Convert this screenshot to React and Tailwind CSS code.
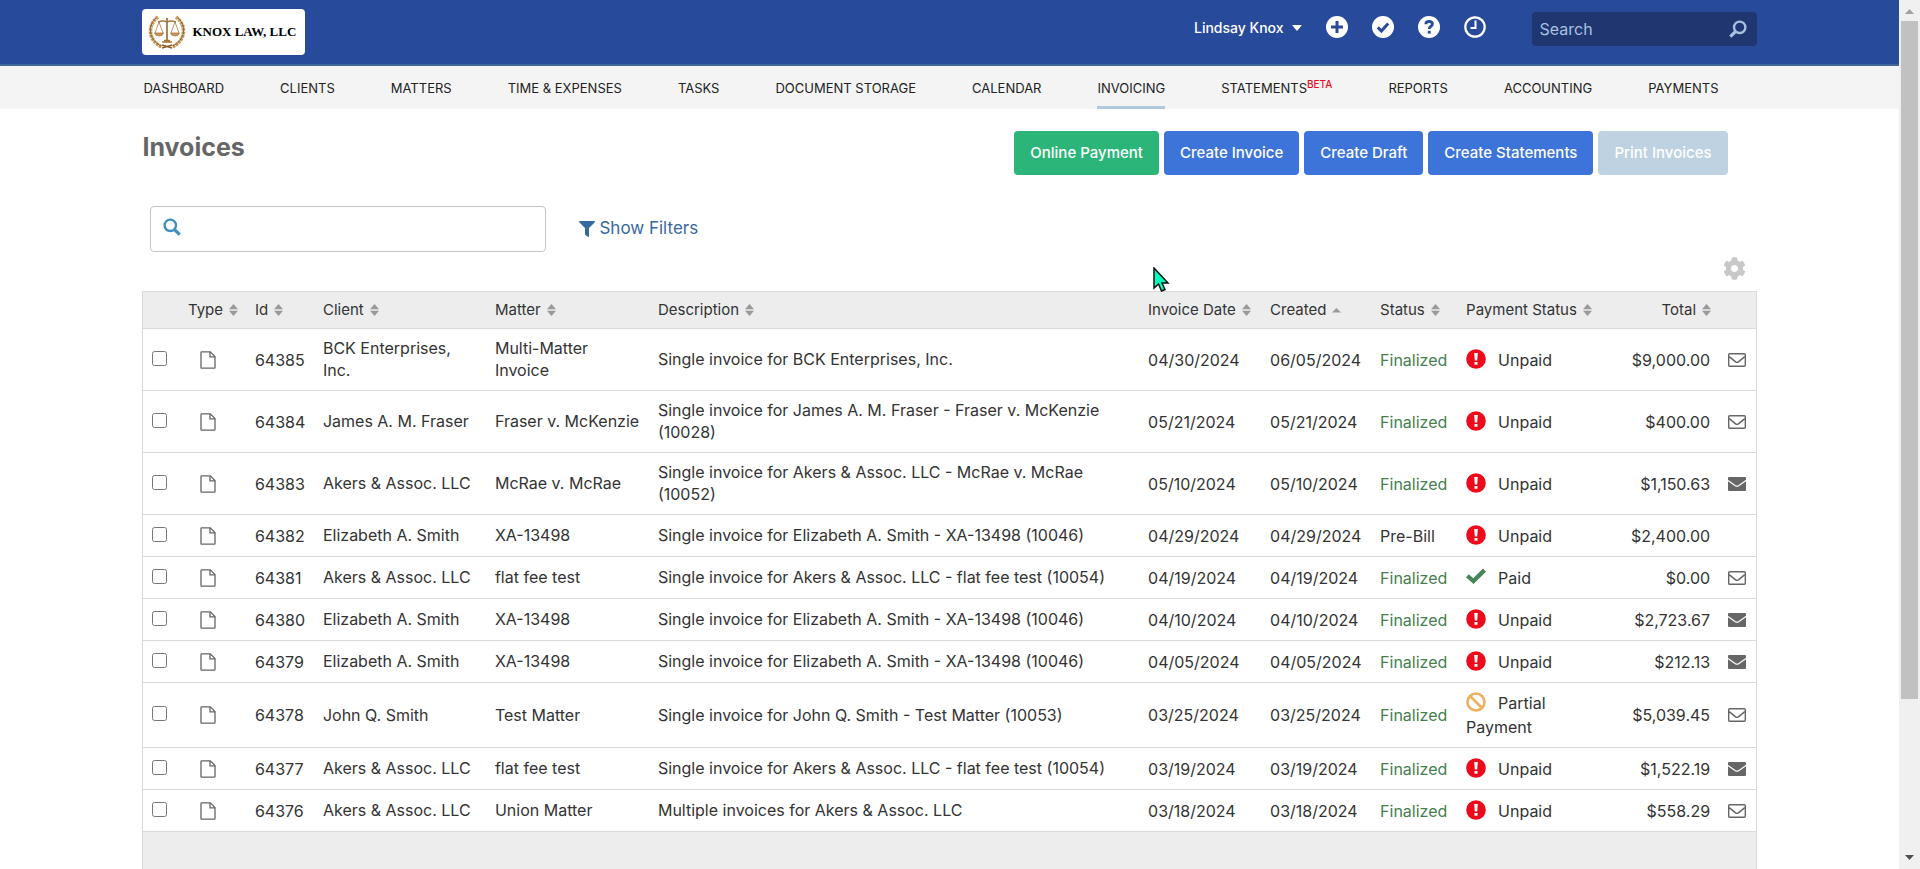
// src/App.jsx

import React, { useState } from 'react';
import { FaCog, FaFilter } from 'react-icons/fa';

const navItems = [
    { label: 'DASHBOARD' },
    { label: 'CLIENTS' },
    { label: 'MATTERS' },
    { label: 'TIME & EXPENSES' },
    { label: 'TASKS' },
    { label: 'DOCUMENT STORAGE' },
    { label: 'CALENDAR' },
    { label: 'INVOICING', active: true },
    { label: 'STATEMENTS', beta: true },
    { label: 'REPORTS' },
    { label: 'ACCOUNTING' },
    { label: 'PAYMENTS' },
];

const actions = [
    { label: 'Online Payment', style: 'bg-[#2bb578]' },
    { label: 'Create Invoice', style: 'bg-[#3c74d9]' },
    { label: 'Create Draft', style: 'bg-[#3c74d9]' },
    { label: 'Create Statements', style: 'bg-[#3c74d9]' },
    { label: 'Print Invoices', style: 'bg-[#bed2e2]', disabled: true },
];

const columns = [
    { label: 'Type', width: 'w-[67px]' },
    { label: 'Id', width: 'w-[68px]' },
    { label: 'Client', width: 'w-[172px]' },
    { label: 'Matter', width: 'w-[163px]' },
    { label: 'Description', width: '' },
    { label: 'Invoice Date', width: 'w-[122px]' },
    { label: 'Created', width: 'w-[110px]', sorted: true },
    { label: 'Status', width: 'w-[86px]' },
    { label: 'Payment Status', width: 'w-[150px]' },
    { label: 'Total', width: 'w-[111px]', right: true },
];

// mail: 'open' = not sent yet, 'sent' = already emailed
const invoices = [
    { id: 64385, client: 'BCK Enterprises, Inc.', matter: 'Multi-Matter Invoice', description: 'Single invoice for BCK Enterprises, Inc.', date: '04/30/2024', created: '06/05/2024', status: 'Finalized', payment: 'Unpaid', total: '$9,000.00', mail: 'open' },
    { id: 64384, client: 'James A. M. Fraser', matter: 'Fraser v. McKenzie', description: 'Single invoice for James A. M. Fraser - Fraser v. McKenzie (10028)', date: '05/21/2024', created: '05/21/2024', status: 'Finalized', payment: 'Unpaid', total: '$400.00', mail: 'open' },
    { id: 64383, client: 'Akers & Assoc. LLC', matter: 'McRae v. McRae', description: 'Single invoice for Akers & Assoc. LLC - McRae v. McRae (10052)', date: '05/10/2024', created: '05/10/2024', status: 'Finalized', payment: 'Unpaid', total: '$1,150.63', mail: 'sent' },
    { id: 64382, client: 'Elizabeth A. Smith', matter: 'XA-13498', description: 'Single invoice for Elizabeth A. Smith - XA-13498 (10046)', date: '04/29/2024', created: '04/29/2024', status: 'Pre-Bill', payment: 'Unpaid', total: '$2,400.00' },
    { id: 64381, client: 'Akers & Assoc. LLC', matter: 'flat fee test', description: 'Single invoice for Akers & Assoc. LLC - flat fee test (10054)', date: '04/19/2024', created: '04/19/2024', status: 'Finalized', payment: 'Paid', total: '$0.00', mail: 'open' },
    { id: 64380, client: 'Elizabeth A. Smith', matter: 'XA-13498', description: 'Single invoice for Elizabeth A. Smith - XA-13498 (10046)', date: '04/10/2024', created: '04/10/2024', status: 'Finalized', payment: 'Unpaid', total: '$2,723.67', mail: 'sent' },
    { id: 64379, client: 'Elizabeth A. Smith', matter: 'XA-13498', description: 'Single invoice for Elizabeth A. Smith - XA-13498 (10046)', date: '04/05/2024', created: '04/05/2024', status: 'Finalized', payment: 'Unpaid', total: '$212.13', mail: 'sent' },
    { id: 64378, client: 'John Q. Smith', matter: 'Test Matter', description: 'Single invoice for John Q. Smith - Test Matter (10053)', date: '03/25/2024', created: '03/25/2024', status: 'Finalized', payment: 'Partial Payment', total: '$5,039.45', mail: 'open' },
    { id: 64377, client: 'Akers & Assoc. LLC', matter: 'flat fee test', description: 'Single invoice for Akers & Assoc. LLC - flat fee test (10054)', date: '03/19/2024', created: '03/19/2024', status: 'Finalized', payment: 'Unpaid', total: '$1,522.19', mail: 'sent' },
    { id: 64376, client: 'Akers & Assoc. LLC', matter: 'Union Matter', description: 'Multiple invoices for Akers & Assoc. LLC', date: '03/18/2024', created: '03/18/2024', status: 'Finalized', payment: 'Unpaid', total: '$558.29', mail: 'open' },
];

// --- Icons ---

const HeaderIcon = ({ type }) => (
    <svg viewBox="0 0 22 22" className="size-[22px]" fill="none" strokeWidth="3">
        {type === 'clock' ? (
            <>
                <circle cx="11" cy="11" r="9.7" stroke="#fff" strokeWidth="2.2" />
                <path d="M11.5 4.5v7.5H6.5" stroke="#fff" strokeWidth="2" />
            </>
        ) : (
            <circle cx="11" cy="11" r="11" fill="#fff" />
        )}
        {type === 'add' && <path d="M11 5v12M5 11h12" stroke="#284a9b" />}
        {type === 'check' && <path d="M5.8 11.4l3.6 3.6 6.8-7.6" stroke="#284a9b" />}
        {type === 'help' && (
            <>
                <path d="M7.8 8.3c0-4 6.6-3.8 6.6-.3 0 2.4-3.2 2.4-3.2 5" stroke="#284a9b" strokeWidth="2.8" />
                <path d="M9.8 14.8h2.9v2.8H9.8z" fill="#284a9b" />
            </>
        )}
    </svg>
);

const SearchIcon = ({ className }) => (
    <svg viewBox="0 0 18 18" className={className} fill="none" stroke="currentColor">
        <circle cx="7.3" cy="7.3" r="5.7" strokeWidth="2.4" />
        <path d="M11.3 11.3l5.4 5.4" strokeWidth="3.2" />
    </svg>
);

const SortIcon = ({ sorted }) => (
    <svg viewBox="0 0 9 12" className="inline-block w-[9px] h-[12px]" fill="#999">
        {sorted ? <path d="M0 8.5L4.5 4 9 8.5z" /> : <path d="M0 5.3L4.5 0 9 5.3zM0 6.7h9L4.5 12z" />}
    </svg>
);

const FileIcon = () => (
    <svg viewBox="0 0 16 18" className="block w-4 h-[18px]" fill="none" stroke="#666" strokeWidth="1.3">
        <path d="M1 1.5q0-.7.7-.7h8.6L15 5.5v11q0 .7-.7.7H1.7q-.7 0-.7-.7z" />
        <path d="M10 1v4.8h5" />
    </svg>
);

const MailIcon = ({ sent }) => (
    <svg viewBox="0 0 18 14" className="block w-[18px] h-[14px]" fill="none">
        {sent ? (
            <>
                <rect width="18" height="14" rx="1" fill="#666" />
                <path d="M0 3.4l7.4 5.3q1.6 1 3.2 0L18 3.4" stroke="#fff" strokeWidth="1.2" />
            </>
        ) : (
            <>
                <rect x=".7" y=".7" width="16.6" height="12.6" rx="1" stroke="#666" strokeWidth="1.4" />
                <path d="M1.2 3.6l6.4 5.2q1.4 1 2.8 0l6.4-5.2" stroke="#666" strokeWidth="1.5" />
            </>
        )}
    </svg>
);

const PaymentIcon = ({ payment }) => (
    <svg viewBox="0 0 20 20" className="inline-block size-5 mr-3 align-[-3px]" fill="none">
        {payment === 'Unpaid' && (
            <>
                <circle cx="10" cy="10" r="9.8" fill="#ee0a1b" />
                <path d="M8.2 4h3.6l-.6 7.6H8.8zM8.5 13h3v2.8h-3z" fill="#fff" />
            </>
        )}
        {payment === 'Paid' && <path d="M0 10.2l2.8-3 4.4 4L17 1.5l3 3.2L7.5 17z" fill="#458657" />}
        {payment === 'Partial Payment' && (
            <>
                <circle cx="10" cy="10" r="8.5" stroke="#f0b05f" strokeWidth="2.6" />
                <path d="M4 4l12 12" stroke="#f0b05f" strokeWidth="2.6" />
            </>
        )}
    </svg>
);

const LogoMark = () => (
    <svg viewBox="0 0 38 36" className="w-[38px] h-9" fill="none" stroke="#a8783a">
        {/* laurel wreath */}
        <path d="M10 3C-1 11 0 27 14 33M28 3c11 8 10 24-4 30" stroke="#c79a5a" strokeWidth="3.6" strokeDasharray="2.6 .8" />
        <path d="M8 4C-1 12 1 26 13 32M30 4c9 8 7 22-5 28" stroke="#8b5e2b" strokeWidth="1" />
        <path d="M14 34l10-3M14 31l10 3" stroke="#8b5e2b" strokeWidth="1.5" />
        {/* scales */}
        <path d="M19 4v23" strokeWidth="1.8" />
        <path d="M10 8q5-2 9 0 4-2 9 0" strokeWidth="1.5" />
        <path d="M11 8L7 19M11 8l4 11M27 8l-4 11M27 8l4 11" strokeWidth=".8" />
        <path d="M6.500 19h9q-1 3-4.500 3t-4.500-3zM22.500 19h9q-1 3-4.500 3t-4.500-3z" fill="#c79a5a" strokeWidth=".8" />
        <path d="M14 28h10M16 26.500h6" strokeWidth="1.5" />
    </svg>
);

// --- Page sections ---

const Header = () => (
    <header className="bg-[#284a9b] border-b-2 border-[#41679a]">
        <div className="w-[85%] mx-auto h-16 flex items-start justify-between">
            <a href="#" className="mt-[9px] h-[46px] w-[163px] pl-1.5 flex items-center bg-white rounded-sm text-black">
                <LogoMark />
                <span className="ml-1.5 font-['Liberation_Serif',serif] text-[13px] font-bold whitespace-nowrap">KNOX LAW, LLC</span>
            </a>
            <div className="mt-3 flex items-start">
                <button type="button" className="mt-1 flex items-center gap-2 text-sm leading-6 font-medium text-white">
                    Lindsay Knox
                    <svg viewBox="0 0 10 6" className="w-2.5 h-1.5" fill="#fff"><path d="M0 0h10L5 6z" /></svg>
                </button>
                <div className="ml-6 mt-1 flex gap-6">
                    <button type="button" aria-label="Add"><HeaderIcon type="add" /></button>
                    <button type="button" aria-label="Tasks"><HeaderIcon type="check" /></button>
                    <button type="button" aria-label="Help"><HeaderIcon type="help" /></button>
                    <button type="button" aria-label="Timer"><HeaderIcon type="clock" /></button>
                </div>
                <label className="ml-[46px] w-[225px] h-[34px] pl-2 pr-2.5 flex items-center rounded-sm bg-[#1f3670] text-[#a9c0e0]">
                    <input type="text" aria-label="Search" placeholder="Search" className="min-w-0 flex-1 text-base outline-none placeholder:text-[#a9c0e0]" />
                    <SearchIcon className="size-[18px] -scale-x-100" />
                </label>
            </div>
        </div>
    </header>
);

const Navbar = () => (
    <nav className="bg-[#f4f4f4]">
        <div className="w-[85%] mx-auto h-[43px] pl-px pr-[38px] flex justify-between text-[13px] text-[#222]">
            {navItems.map((item) => (
                <a
                    key={item.label}
                    href="#"
                    className={`flex items-center whitespace-nowrap pt-[5px] border-b-3 ${item.active ? 'border-[#b0c7e0]' : 'border-transparent'}`}
                >
                    {item.label}
                    {item.beta && <span className="pb-2 text-[10px] font-medium text-[#ee0a1b]">BETA</span>}
                </a>
            ))}
        </div>
    </nav>
);

const InvoiceRow = ({ invoice, checked, onToggle }) => (
    <tr className="h-[42px] border-b border-[#d9d9d9]">
        <td className="pl-[9px] pb-[3px]">
            <input
                type="checkbox"
                aria-label={`Select invoice ${invoice.id}`}
                checked={checked}
                onChange={onToggle}
                className="block size-[15px]"
            />
        </td>
        <td className="pl-5"><FileIcon /></td>
        <td className="px-2">{invoice.id}</td>
        <td className="px-2 pt-2 pb-[9px]">{invoice.client}</td>
        <td className="px-2 pt-2 pb-[9px]">{invoice.matter}</td>
        <td className="px-2 pt-2 pb-[9px]">{invoice.description}</td>
        <td className="px-2">{invoice.date}</td>
        <td className="px-2">{invoice.created}</td>
        <td className={invoice.status === 'Finalized' ? 'px-2 text-[#44804f]' : 'px-2'}>{invoice.status}</td>
        <td className="px-2 py-2 leading-6"><PaymentIcon payment={invoice.payment} />{invoice.payment}</td>
        <td className="pl-2 pr-[9px] text-right">{invoice.total}</td>
        <td className="pl-[9px]">
            {invoice.mail && (
                <button type="button" aria-label="Email invoice" className="block">
                    <MailIcon sent={invoice.mail === 'sent'} />
                </button>
            )}
        </td>
    </tr>
);

const InvoiceTable = () => {
    const [selected, setSelected] = useState([]);

    const toggle = (id) => {
        setSelected(selected.includes(id) ? selected.filter((s) => s !== id) : [...selected, id]);
    };

    return (
        <table className="w-full table-fixed border-collapse border border-[#d9d9d9] text-base leading-[22px] text-[#333]">
            <thead className="text-[15px]">
                <tr className="h-[37px] bg-[#ededed] border-b border-[#d9d9d9]">
                    <th className="w-[37px]" aria-label="Select"></th>
                    {columns.map((col) => (
                        <th key={col.label} className={`${col.width} px-2 font-normal ${col.right ? 'text-right' : 'text-left'}`}>
                            <button type="button" className="inline-flex items-center gap-1.5 whitespace-nowrap">
                                {col.label}
                                <SortIcon sorted={col.sorted} />
                            </button>
                        </th>
                    ))}
                    <th className="w-[37px]" aria-label="Email"></th>
                </tr>
            </thead>
            <tbody>
                {invoices.map((invoice) => (
                    <InvoiceRow
                        key={invoice.id}
                        invoice={invoice}
                        checked={selected.includes(invoice.id)}
                        onToggle={() => toggle(invoice.id)}
                    />
                ))}
            </tbody>
            <tfoot>
                <tr className="h-20 bg-[#ededed]">
                    <td colSpan={12}></td>
                </tr>
            </tfoot>
        </table>
    );
};

const Scrollbar = () => (
    <div className="w-[21px] shrink-0 bg-[#f0f0f0] flex flex-col items-center" aria-hidden="true">
        <svg viewBox="0 0 21 21" className="size-[21px] shrink-0" fill="#a0a0a0"><path d="M6 14l4.500-5 4.500 5z" /></svg>
        <div className="w-[17px] h-[78%] bg-[#c1c1c1]"></div>
        <svg viewBox="0 0 21 21" className="size-[21px] shrink-0 mt-auto" fill="#505050"><path d="M6 7l4.500 5L15 7z" /></svg>
    </div>
);

const App = () => {
    return (
        <div className="relative flex h-screen overflow-hidden bg-white font-['Inter',sans-serif]">
            <div className="flex-1 min-w-0 overflow-hidden">
                <Header />
                <Navbar />
                <main className="w-[85%] mx-auto">
                    <div className="pt-[22px] pr-[29px] flex items-start justify-between">
                        <h1 className="text-[25px] leading-8 font-bold text-[#666]">Invoices</h1>
                        <div className="flex gap-[5px]">
                            {actions.map((action) => (
                                <button
                                    key={action.label}
                                    type="button"
                                    disabled={action.disabled}
                                    className={`h-11 px-4 rounded-sm text-[15px] font-medium text-white whitespace-nowrap ${action.style}`}
                                >
                                    {action.label}
                                </button>
                            ))}
                        </div>
                    </div>

                    <div className="mt-[31px] pl-2 flex items-center gap-[33px]">
                        <label className="w-[396px] h-[46px] pl-3 pr-3 flex items-center gap-2 border border-[#c4c4c4] rounded-sm">
                            <SearchIcon className="size-[18px] mb-1 text-[#3f8fc0]" />
                            <input type="text" aria-label="Search invoices" className="min-w-0 flex-1 text-base outline-none" />
                        </label>
                        <button type="button" className="flex items-center gap-1 text-[17px] text-[#3768a0]">
                            <FaFilter className="size-4" />
                            Show Filters
                        </button>
                    </div>

                    <div className="pt-[5px] pb-[11px] pr-[11px] flex justify-end">
                        <button type="button" aria-label="Table settings" className="text-[#c8c8c8]">
                            <FaCog className="size-[23px]" />
                        </button>
                    </div>

                    <InvoiceTable />
                </main>
            </div>
            <Scrollbar />

            {/* Mouse pointer */}
            <svg viewBox="0 0 18 25" className="absolute left-[60%] top-[267px] w-[18px] h-[25px]" fill="#0fb" stroke="#111" strokeWidth="1.5">
                <path d="M2 1v20l4.500-4 3 7 3.500-1.500-3-6.500H16z" />
            </svg>
        </div>
    );
};

export default App;
